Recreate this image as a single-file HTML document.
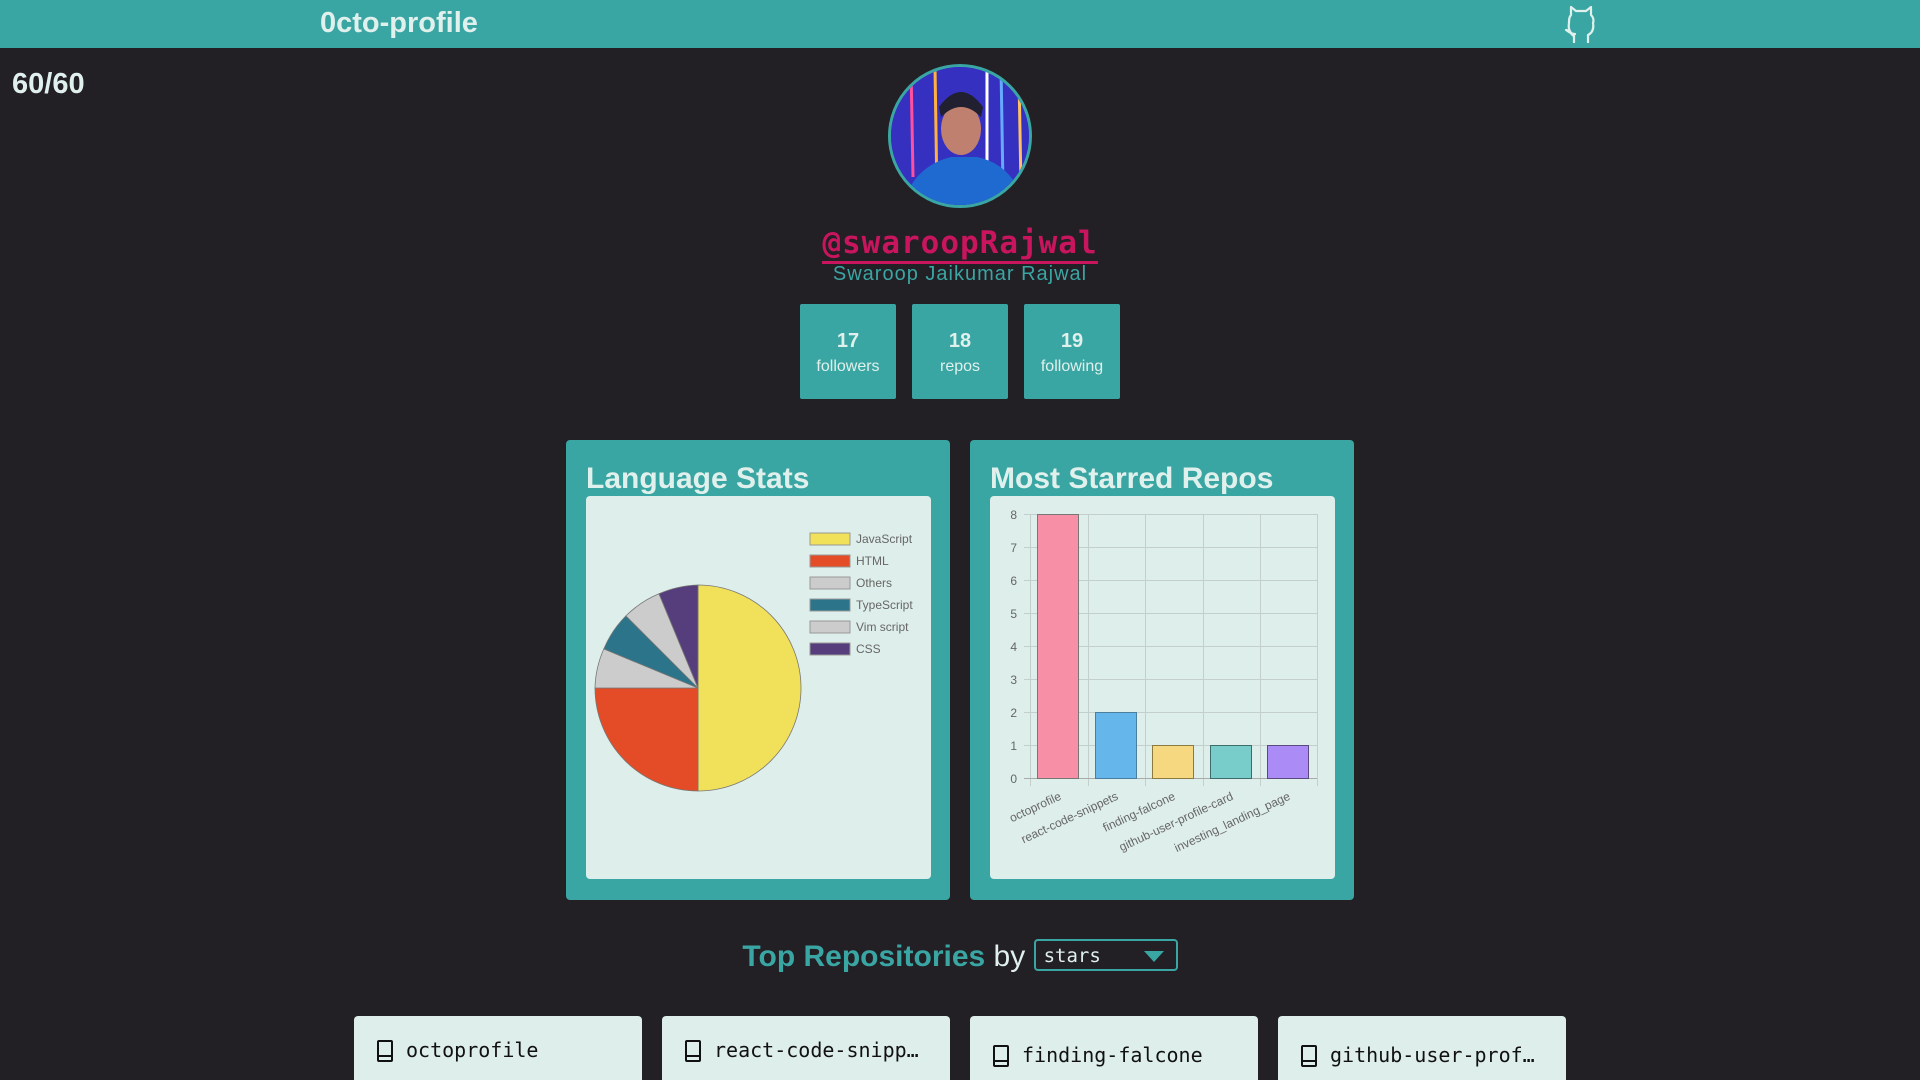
<!DOCTYPE html>
<html style="width:1920px;height:1080px;overflow:hidden"><head><meta charset="utf-8">
<style>
*{box-sizing:border-box;margin:0;padding:0}
html,body{overflow:hidden}
body{width:1920px;height:1080px;overflow:hidden;background:#221f25;font-family:"Liberation Sans",sans-serif;color:#e0f0ec;position:relative}
.hdr{position:absolute;left:0;top:0;width:1920px;height:48px;background:#3aa6a3}
.hdr .t{position:absolute;left:320px;top:7px;font-size:29px;font-weight:bold;color:#e0f0ec}
.rate{position:absolute;left:12px;top:68px;font-size:29px;font-weight:bold}
.av{position:absolute;left:888px;top:64px;width:144px;height:144px;border-radius:50%;border:3px solid #3aa6a3;overflow:hidden;background:linear-gradient(90deg,#3a22a0,#2a2ad0 40%,#3040e0)}
.user{position:absolute;left:0;width:1920px;top:225px;text-align:center;font-family:"DejaVu Sans Mono","Liberation Mono",monospace;font-size:31px;font-weight:bold;color:#c8155e;letter-spacing:1px}
.user span{border-bottom:3px solid #c8155e;padding-bottom:0}
.name{position:absolute;left:0;width:1920px;top:263px;text-align:center;font-size:20px;color:#3aa6a3;letter-spacing:1px}
.stat{position:absolute;top:304px;width:96px;height:95px;background:#3aa6a3;border-radius:2px;text-align:center}
.stat b{display:block;margin-top:26px;font-size:20px}
.stat i{display:block;font-style:normal;font-size:16px;margin-top:5px}
.card{position:absolute;top:440px;width:384px;height:460px;background:#3aa6a3;border-radius:4px}
.card h2{position:absolute;left:20px;top:22px;font-size:30px;font-weight:bold}
.card .in{position:absolute;left:20px;top:56px;width:345px;height:383px;background:#deeeea;border-radius:4px}
.top{position:absolute;left:0;width:1920px;top:940px;text-align:center;font-size:30px}
.top b{color:#3aa6a3}
.sel{display:inline-block;vertical-align:middle;width:144px;height:32px;border:2px solid #3aa6a3;border-radius:4px;text-align:left;font-family:"DejaVu Sans Mono",monospace;font-size:19px;padding:4px 8px;position:relative;margin-top:-6px}
.sel:after{content:"";position:absolute;right:12px;top:10px;border-left:10px solid transparent;border-right:10px solid transparent;border-top:11px solid #3aa6a3}
.repo{position:absolute;top:1016px;width:288px;height:64px;border-radius:4px 4px 0 0;background:#deeeea;color:#111;font-family:"DejaVu Sans Mono",monospace;font-size:20px}
.repo div{position:absolute;left:52px;white-space:nowrap}
.repo svg{position:absolute;left:22px}
</style></head><body>
<div class="hdr"><div class="t">0cto-profile</div>
<svg style="position:absolute;left:1560px;top:3px" width="42" height="40" viewBox="0 0 42 40" fill="none" stroke="#e0f0ec" stroke-width="2.2" stroke-linecap="round" stroke-linejoin="round"><path d="M14 40V32C10 30 8 26 9 20C9 17 9 14 11 12V4L16 8H26L31 4V12C33 14 34 17 33 20C34 26 32 30 28 32V40"/><path d="M15 31C11 31 9 29 6 27C10 27 11 32 14 33"/></svg></div>
<div class="rate">60/60</div>
<div class="av"><svg width="144" height="144" viewBox="0 0 144 144"><rect width="144" height="144" fill="#3530c0"/><g stroke-width="3"><line x1="20" y1="0" x2="22" y2="110" stroke="#ff4fa0"/><line x1="44" y1="0" x2="46" y2="130" stroke="#ffb040"/><line x1="96" y1="0" x2="96" y2="100" stroke="#ffffff"/><line x1="110" y1="0" x2="112" y2="120" stroke="#6af"/><line x1="128" y1="10" x2="130" y2="120" stroke="#ffc060"/></g><ellipse cx="70" cy="62" rx="20" ry="26" fill="#c08070"/><path d="M48 40Q70 10 92 40L90 50Q70 30 50 50Z" fill="#202030"/><path d="M10 144Q20 100 60 90H86Q125 98 135 144Z" fill="#1f6ad0"/></svg></div>
<div class="user"><span>@swaroopRajwal</span></div>
<div class="name">Swaroop Jaikumar Rajwal</div>
<div class="stat" style="left:800px"><b>17</b><i>followers</i></div>
<div class="stat" style="left:912px"><b>18</b><i>repos</i></div>
<div class="stat" style="left:1024px"><b>19</b><i>following</i></div>

<div class="card" style="left:566px"><h2>Language Stats</h2><div class="in">
<svg width="345" height="383" font-family="Liberation Sans,sans-serif" font-size="12" fill="#666">
<g stroke="#777" stroke-width="0.8">
<path d="M112 192L112 89A103 103 0 0 1 112 295Z" fill="#f1e05a"/>
<path d="M112 192L112 295A103 103 0 0 1 9 192Z" fill="#e34c26"/>
<path d="M112 192L9 192A103 103 0 0 1 17.8 152.9Z" fill="#cccccc"/>
<path d="M112 192L17.8 152.9A103 103 0 0 1 39.9 119.9Z" fill="#2b7489"/>
<path d="M112 192L39.9 119.9A103 103 0 0 1 73 97.8Z" fill="#cccccc"/>
<path d="M112 192L73 97.8A103 103 0 0 1 112 89Z" fill="#563d7c"/>
</g>
<g stroke="#999" stroke-width="1">
<rect x="224" y="37" width="40" height="12" fill="#f1e05a"/>
<rect x="224" y="59" width="40" height="12" fill="#e34c26"/>
<rect x="224" y="81" width="40" height="12" fill="#cccccc"/>
<rect x="224" y="103" width="40" height="12" fill="#2b7489"/>
<rect x="224" y="125" width="40" height="12" fill="#cccccc"/>
<rect x="224" y="147" width="40" height="12" fill="#563d7c"/>
</g>
<text x="270" y="47">JavaScript</text><text x="270" y="69">HTML</text><text x="270" y="91">Others</text><text x="270" y="113">TypeScript</text><text x="270" y="135">Vim script</text><text x="270" y="157">CSS</text>
</svg></div></div>

<div class="card" style="left:970px"><h2>Most Starred Repos</h2><div class="in">
<svg width="345" height="383" font-family="Liberation Sans,sans-serif" font-size="12" fill="#666">
<g stroke="#c2cfcc" stroke-width="1">
<line x1="34" y1="18.5" x2="327" y2="18.5"/><line x1="34" y1="51.5" x2="327" y2="51.5"/><line x1="34" y1="84.5" x2="327" y2="84.5"/><line x1="34" y1="117.5" x2="327" y2="117.5"/><line x1="34" y1="150.5" x2="327" y2="150.5"/><line x1="34" y1="183.5" x2="327" y2="183.5"/><line x1="34" y1="216.5" x2="327" y2="216.5"/><line x1="34" y1="249.5" x2="327" y2="249.5"/>
<line x1="40.5" y1="18" x2="40.5" y2="290"/><line x1="98.5" y1="18" x2="98.5" y2="290"/><line x1="155.5" y1="18" x2="155.5" y2="290"/><line x1="213.5" y1="18" x2="213.5" y2="290"/><line x1="270.5" y1="18" x2="270.5" y2="290"/><line x1="327.5" y1="18" x2="327.5" y2="290"/>
</g>
<line x1="34" y1="282.5" x2="327" y2="282.5" stroke="#aaa"/>
<g stroke-width="1">
<rect x="47.5" y="18.5" width="41" height="264" fill="#f78fa7" stroke="#777"/>
<rect x="105.5" y="216.5" width="41" height="66" fill="#65b6ea" stroke="#4a7fa0"/>
<rect x="162.5" y="249.5" width="41" height="33" fill="#f5d880" stroke="#8a7a40"/>
<rect x="220.5" y="249.5" width="41" height="33" fill="#78cdcb" stroke="#3a6d6b"/>
<rect x="277.5" y="249.5" width="41" height="33" fill="#ab8cf6" stroke="#5a4a80"/>
</g>
<g text-anchor="end"><text x="27" y="23">8</text><text x="27" y="56">7</text><text x="27" y="89">6</text><text x="27" y="122">5</text><text x="27" y="155">4</text><text x="27" y="188">3</text><text x="27" y="221">2</text><text x="27" y="254">1</text><text x="27" y="287">0</text>
<text transform="translate(72,303) rotate(-25)">octoprofile</text>
<text transform="translate(129,303) rotate(-25)">react-code-snippets</text>
<text transform="translate(186,303) rotate(-25)">finding-falcone</text>
<text transform="translate(244,303) rotate(-25)">github-user-profile-card</text>
<text transform="translate(301,303) rotate(-25)">investing_landing_page</text></g>
</svg></div></div>

<div class="top"><b>Top Repositories</b> by <span class="sel">stars</span></div>

<div class="repo" style="left:354px"><svg style="top:24px" width="18" height="22" viewBox="0 0 18 22" fill="none" stroke="#111" stroke-width="2"><rect x="2" y="1" width="14" height="20" rx="1"/><line x1="2" y1="16" x2="16" y2="16"/></svg><div style="top:22px">octoprofile</div></div>
<div class="repo" style="left:662px"><svg style="top:24px" width="18" height="22" viewBox="0 0 18 22" fill="none" stroke="#111" stroke-width="2"><rect x="2" y="1" width="14" height="20" rx="1"/><line x1="2" y1="16" x2="16" y2="16"/></svg><div style="top:22px">react-code-snipp…</div></div>
<div class="repo" style="left:970px"><svg style="top:29px" width="18" height="22" viewBox="0 0 18 22" fill="none" stroke="#111" stroke-width="2"><rect x="2" y="1" width="14" height="20" rx="1"/><line x1="2" y1="16" x2="16" y2="16"/></svg><div style="top:27px">finding-falcone</div></div>
<div class="repo" style="left:1278px"><svg style="top:29px" width="18" height="22" viewBox="0 0 18 22" fill="none" stroke="#111" stroke-width="2"><rect x="2" y="1" width="14" height="20" rx="1"/><line x1="2" y1="16" x2="16" y2="16"/></svg><div style="top:27px">github-user-prof…</div></div>
</body></html>
